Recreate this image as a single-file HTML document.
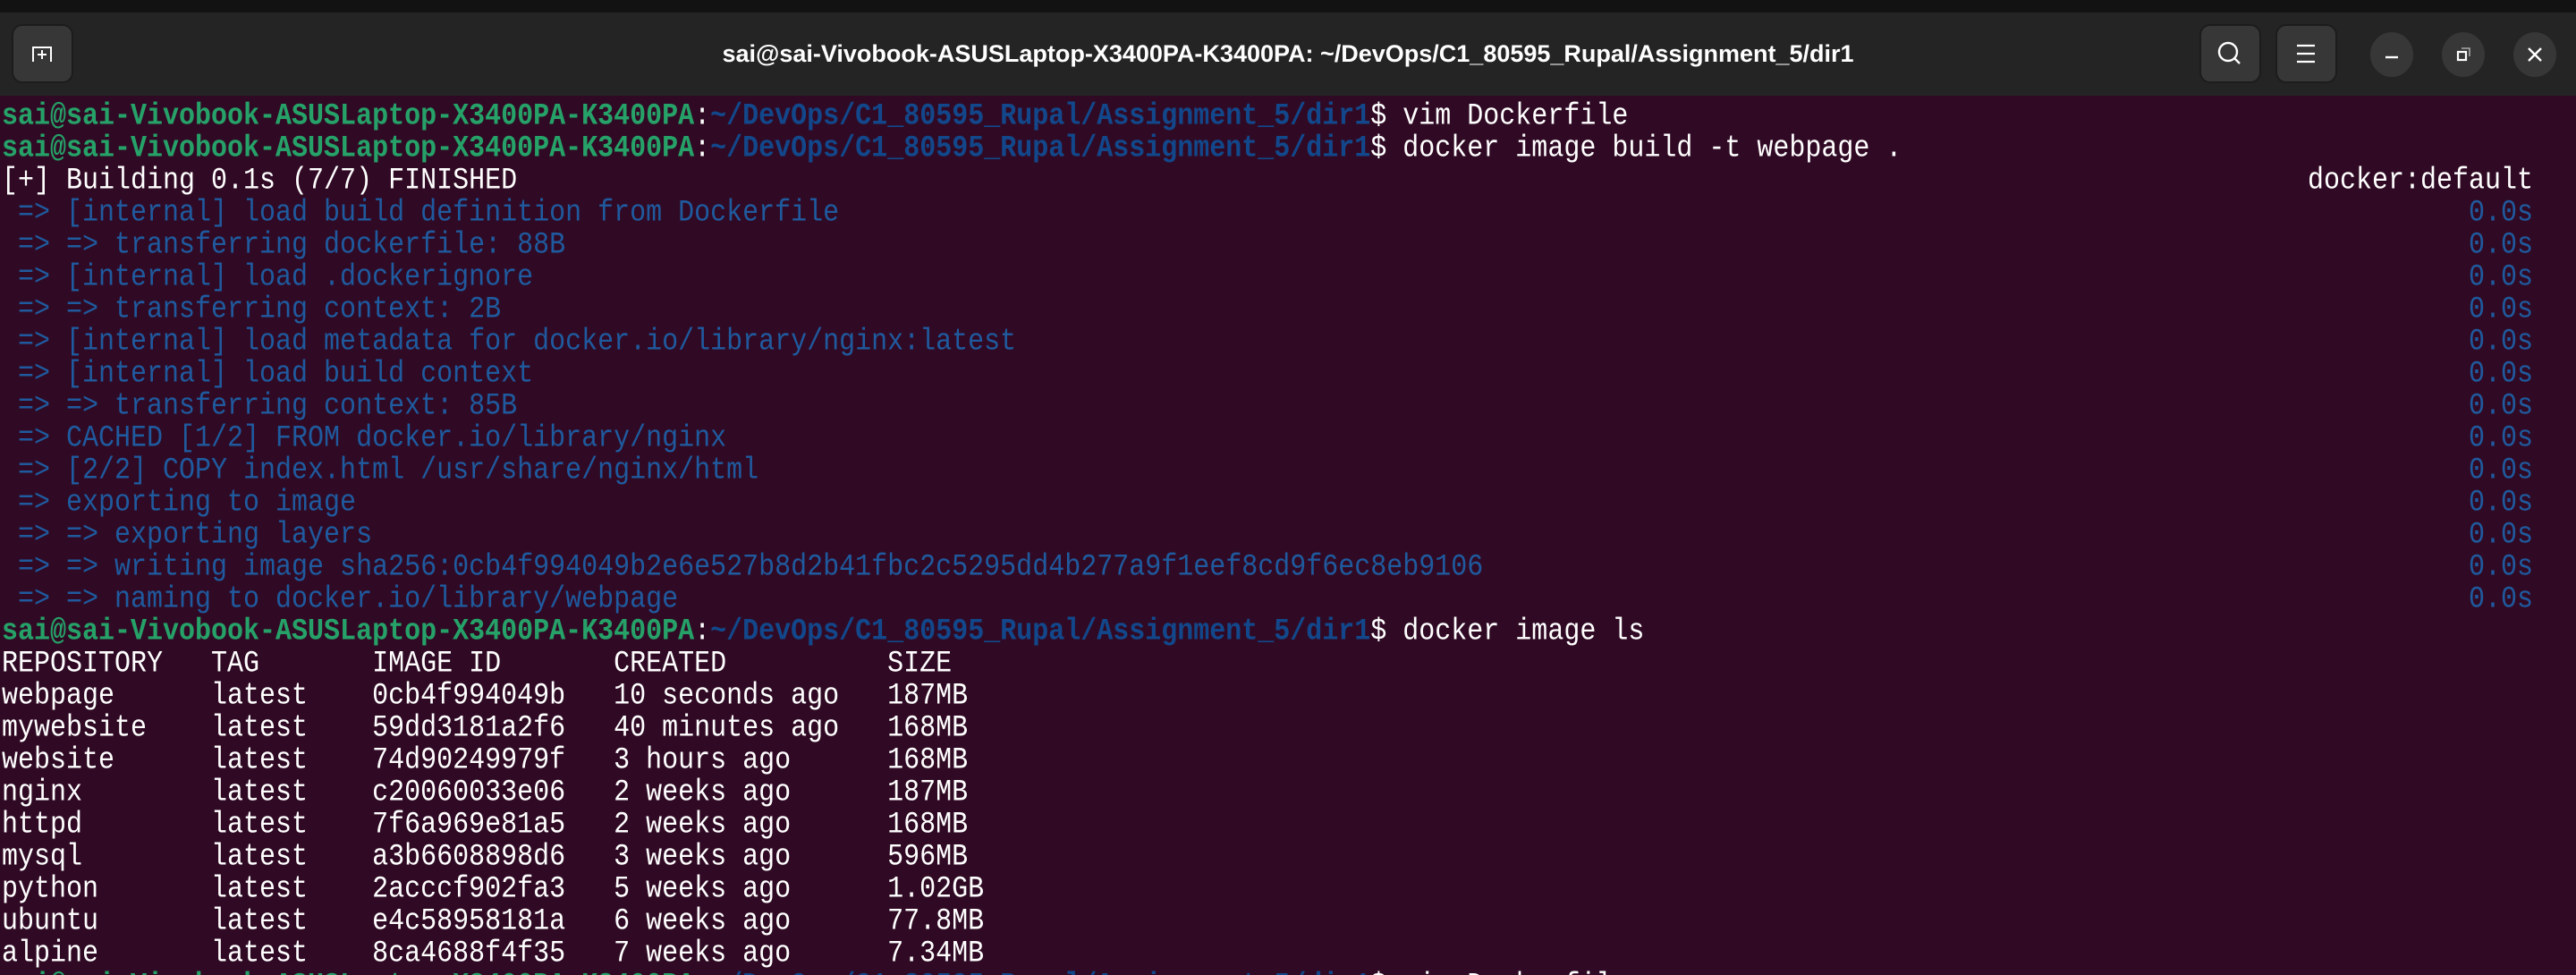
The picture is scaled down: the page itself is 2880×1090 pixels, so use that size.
<!DOCTYPE html>
<html><head><meta charset="utf-8"><style>
*{margin:0;padding:0;box-sizing:border-box}
html,body{width:2880px;height:1090px;overflow:hidden}
body{background:#300a24;position:relative;font-family:"Liberation Mono",monospace}
#top{position:absolute;left:0;top:0;width:2880px;height:14px;background:#121212}
#bar{position:absolute;left:0;top:14px;width:2880px;height:93px;background:#242424}
.btn{position:absolute;top:13px;width:69px;height:66px;border-radius:12px;background:#373737;border:2px solid #1c1c1c}
.circ{position:absolute;top:22px;width:48px;height:50px;border-radius:50%;background:#373737}
#title{position:absolute;left:0;width:2880px;top:0;height:93px;text-align:center;color:#fff;font:bold 27px "Liberation Sans",sans-serif;line-height:93px}
#term{position:absolute;left:2px;top:113px;width:2830px;color:#fff;font-size:30px;line-height:36px}
.l{height:36px;position:relative;white-space:pre}
.l span.r{position:absolute;right:0;top:0}
.g{color:#26a269;font-weight:bold}.b{color:#12488b;font-weight:bold}.d{color:#1f5a9e}
.in{display:inline-block;transform:scaleY(1.15);transform-origin:50% 60%}
</style></head><body>
<div id="top"></div>
<div id="bar">
<div id="title">sai@sai-Vivobook-ASUSLaptop-X3400PA-K3400PA: ~/DevOps/C1_80595_Rupal/Assignment_5/dir1</div>
<div class="btn" style="left:13px"><svg width="65" height="62" viewBox="0 0 65 62"><path d="M22 40V24h20v16M32 27v10M27 32h10" stroke="#fff" stroke-width="2" fill="none"/></svg></div>
<div class="btn" style="left:2459px"><svg width="65" height="62" viewBox="0 0 65 62"><circle cx="30" cy="29" r="10" stroke="#fff" stroke-width="2.4" fill="none"/><path d="M37 36l6 6" stroke="#fff" stroke-width="2.4"/></svg></div>
<div class="btn" style="left:2544px"><svg width="65" height="62" viewBox="0 0 65 62"><path d="M22 22h20M22 31h20M22 40h20" stroke="#fff" stroke-width="2.2"/></svg></div>
<div class="circ" style="left:2650px"><svg width="48" height="50"><path d="M17 28h14" stroke="#fff" stroke-width="2.4"/></svg></div>
<div class="circ" style="left:2730px"><svg width="48" height="50"><rect x="18" y="22" width="9" height="9" stroke="#fff" stroke-width="2.2" fill="none"/><path d="M22 18h9v9" stroke="#aaa" stroke-width="1.6" fill="none"/></svg></div>
<div class="circ" style="left:2810px"><svg width="48" height="50"><path d="M17 18l14 14M31 18l-14 14" stroke="#fff" stroke-width="2.4"/></svg></div>
</div>
<div id="term"><div class="l"><span class="in"><span class="g">sai@sai-Vivobook-ASUSLaptop-X3400PA-K3400PA</span>:<span class="b">~/DevOps/C1_80595_Rupal/Assignment_5/dir1</span>$ vim Dockerfile</span></div><div class="l"><span class="in"><span class="g">sai@sai-Vivobook-ASUSLaptop-X3400PA-K3400PA</span>:<span class="b">~/DevOps/C1_80595_Rupal/Assignment_5/dir1</span>$ docker image build -t webpage .</span></div><div class="l"><span class="in">[+] Building 0.1s (7/7) FINISHED</span><span class="r in">docker:default</span></div><div class="l d"><span class="in"> => [internal] load build definition from Dockerfile</span><span class="r in">0.0s</span></div><div class="l d"><span class="in"> => => transferring dockerfile: 88B</span><span class="r in">0.0s</span></div><div class="l d"><span class="in"> => [internal] load .dockerignore</span><span class="r in">0.0s</span></div><div class="l d"><span class="in"> => => transferring context: 2B</span><span class="r in">0.0s</span></div><div class="l d"><span class="in"> => [internal] load metadata for docker.io/library/nginx:latest</span><span class="r in">0.0s</span></div><div class="l d"><span class="in"> => [internal] load build context</span><span class="r in">0.0s</span></div><div class="l d"><span class="in"> => => transferring context: 85B</span><span class="r in">0.0s</span></div><div class="l d"><span class="in"> => CACHED [1/2] FROM docker.io/library/nginx</span><span class="r in">0.0s</span></div><div class="l d"><span class="in"> => [2/2] COPY index.html /usr/share/nginx/html</span><span class="r in">0.0s</span></div><div class="l d"><span class="in"> => exporting to image</span><span class="r in">0.0s</span></div><div class="l d"><span class="in"> => => exporting layers</span><span class="r in">0.0s</span></div><div class="l d"><span class="in"> => => writing image sha256:0cb4f994049b2e6e527b8d2b41fbc2c5295dd4b277a9f1eef8cd9f6ec8eb9106</span><span class="r in">0.0s</span></div><div class="l d"><span class="in"> => => naming to docker.io/library/webpage</span><span class="r in">0.0s</span></div><div class="l"><span class="in"><span class="g">sai@sai-Vivobook-ASUSLaptop-X3400PA-K3400PA</span>:<span class="b">~/DevOps/C1_80595_Rupal/Assignment_5/dir1</span>$ docker image ls</span></div><div class="l"><span class="in">REPOSITORY   TAG       IMAGE ID       CREATED          SIZE</span></div><div class="l"><span class="in">webpage      latest    0cb4f994049b   10 seconds ago   187MB</span></div><div class="l"><span class="in">mywebsite    latest    59dd3181a2f6   40 minutes ago   168MB</span></div><div class="l"><span class="in">website      latest    74d90249979f   3 hours ago      168MB</span></div><div class="l"><span class="in">nginx        latest    c20060033e06   2 weeks ago      187MB</span></div><div class="l"><span class="in">httpd        latest    7f6a969e81a5   2 weeks ago      168MB</span></div><div class="l"><span class="in">mysql        latest    a3b6608898d6   3 weeks ago      596MB</span></div><div class="l"><span class="in">python       latest    2acccf902fa3   5 weeks ago      1.02GB</span></div><div class="l"><span class="in">ubuntu       latest    e4c58958181a   6 weeks ago      77.8MB</span></div><div class="l"><span class="in">alpine       latest    8ca4688f4f35   7 weeks ago      7.34MB</span></div><div class="l"><span class="in"><span class="g">sai@sai-Vivobook-ASUSLaptop-X3400PA-K3400PA</span>:<span class="b">~/DevOps/C1_80595_Rupal/Assignment_5/dir1</span>$ vim Dockerfile</span></div></div>
</body></html>
